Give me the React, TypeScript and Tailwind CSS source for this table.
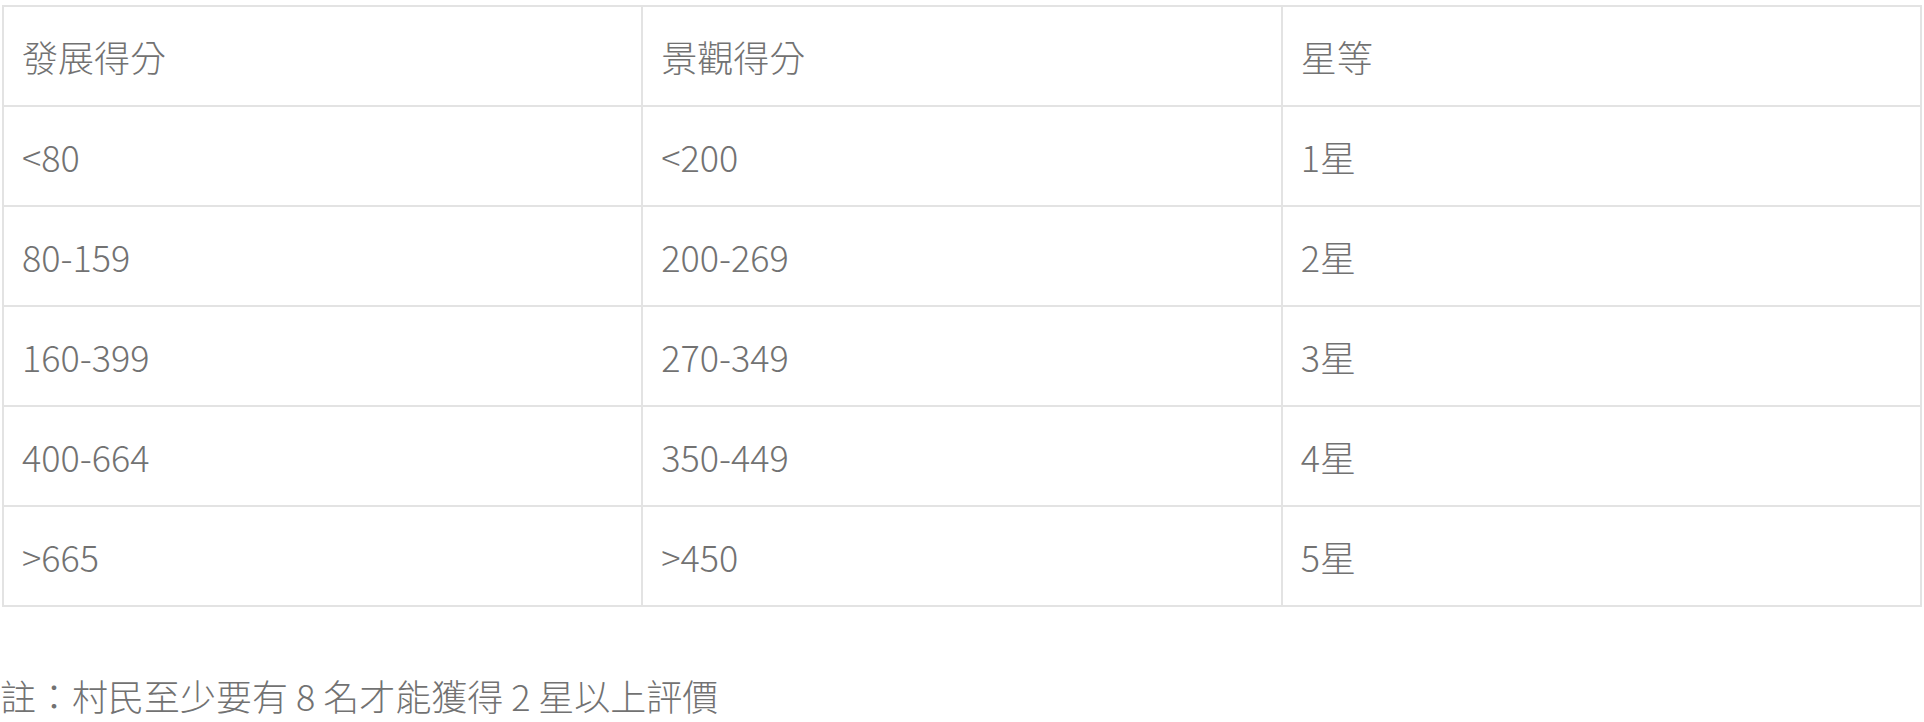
const rows = [
  ['<80', '<200', '1星'],
  ['80-159', '200-269', '2星'],
  ['160-399', '270-349', '3星'],
  ['400-664', '350-449', '4星'],
  ['>665', '>450', '5星'],
]

export default function App() {
  return (
    <div className="bg-white w-[1924px] h-[722px] overflow-hidden font-light text-[#727272] font-['Noto_Sans_CJK_TC','Noto_Sans',sans-serif]">
      <table className="ml-[2px] mt-[5px] w-[1920px] table-fixed border-collapse border-2 border-[#e3e3e3] text-[36px]">
        <thead>
          <tr className="h-[100px]">
            <th className="border-2 border-[#e3e3e3] px-[18px] text-left font-light">發展得分</th>
            <th className="border-2 border-[#e3e3e3] px-[18px] text-left font-light">景觀得分</th>
            <th className="border-2 border-[#e3e3e3] px-[18px] text-left font-light">星等</th>
          </tr>
        </thead>
        <tbody>
          {rows.map((r, i) => (
            <tr key={i} className="h-[100px]">
              {r.map((c, j) => (
                <td key={j} className="border-2 border-[#e3e3e3] px-[18px]">{c}</td>
              ))}
            </tr>
          ))}
        </tbody>
      </table>
      <p className="mt-[62px] text-[36px] leading-[52px]">註：村民至少要有 8 名才能獲得 2 星以上評價</p>
    </div>
  )
}
